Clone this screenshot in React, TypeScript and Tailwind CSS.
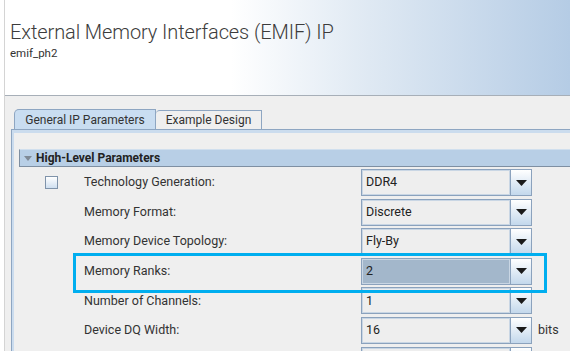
import React from 'react';

const ROWS = [
  { label: 'Technology Generation:', value: 'DDR4', check: true },
  { label: 'Memory Format:', value: 'Discrete' },
  { label: 'Memory Device Topology:', value: 'Fly-By' },
  { label: 'Memory Ranks:', value: '2', selected: true },
  { label: 'Number of Channels:', value: '1' },
  { label: 'Device DQ Width:', value: '16', unit: 'bits' },
  { label: '', value: '' },
];

function Dropdown({ value, selected }: { value: string; selected?: boolean }) {
  return (
    <div className="flex h-[27px] w-[171px] shrink-0">
      <div
        className={`flex-1 flex items-center pl-[4px] text-[12.5px] text-[#222] border border-[#8ba2bd] shadow-[inset_0_0_0_1px_#c9d6e4] ${
          selected ? 'bg-[#a3b7cb]' : 'bg-[#eeeeee]'
        }`}
      >
        {value}
      </div>
      <div className="w-[21px] flex items-center justify-center border border-l-0 border-[#8ba2bd] bg-[linear-gradient(to_bottom,#ffffff,#c3d8ec)]">
        <svg width="11" height="6" viewBox="0 0 11 6">
          <path d="M0 0 H11 L5.5 6 Z" fill="#1a1a1a" />
        </svg>
      </div>
    </div>
  );
}

export default function App() {
  return (
    <div className="relative w-[570px] h-[351px] overflow-hidden flex bg-white font-['Roboto',sans-serif] text-[#333]">
      <div className="w-[5px] shrink-0 bg-white border-r border-[#d4d4d4]" />
      <div className="flex-1 flex flex-col">
        <div className="h-[96px] shrink-0 border-b border-[#a7afb8] bg-[linear-gradient(to_right,#ffffff_0%,#ffffff_40%,#e2ebf4_62%,#b5cce5_100%)] pl-[5px] pt-[19px]">
          <h1 className="text-[20px] leading-[26px] font-light text-[#3c3c3c] tracking-[-0.1px]">External Memory Interfaces (EMIF) IP</h1>
          <p className="text-[11.5px] leading-[14px] text-[#333] mt-[1px]">emif_ph2</p>
        </div>

        <div className="flex-1 bg-[#efefef] pt-[13px] flex flex-col">
          <div className="flex ml-[9px] h-[20px]">
            <div className="w-[142px] h-full flex items-center justify-center text-[12px] text-[#333] bg-[#c9ddf1] border border-b-0 border-[#8ea6c2] rounded-tl-[5px]">
              General IP Parameters
            </div>
            <div className="w-[106px] h-[19px] mt-[1px] flex items-center justify-center text-[12px] text-[#333] bg-[#efefef] border border-l-0 border-b-0 border-[#8ea6c2] rounded-tl-[4px]">
              Example Design
            </div>
          </div>

          <div className="flex-1 ml-[6px] border-t border-l border-[#8ea6c2]">
            <div className="h-full border-t-[3px] border-l-[2px] border-[#cbdcee] pt-[16px] pl-[5px]">
              <div className="h-[18px] flex items-center bg-[#b8cfe6] border-t border-[#d0dfee] border-b border-l border-b-[#7e8fa2] border-l-[#7e8fa2] pl-[4px] gap-[4px]">
                <svg width="8" height="5" viewBox="0 0 8 5">
                  <path d="M0 0 H8 L4 5 Z" fill="#7f8a96" />
                </svg>
                <span className="text-[12px] font-bold text-[#222]">High-Level Parameters</span>
              </div>

              <div className="pt-[2px] flex flex-col">
                {ROWS.map((r, i) => (
                  <div key={i} className="h-[29.6px] flex items-start">
                    <div className="w-[65px] h-[27px] shrink-0 flex items-center">
                      {r.check && (
                        <div className="ml-[26px] w-[13px] h-[13px] border border-[#7f93aa] bg-[linear-gradient(to_bottom,#ffffff,#cfdff0)]" />
                      )}
                    </div>
                    <div className="w-[277px] h-[27px] shrink-0 flex items-center text-[12.5px] text-[#333]">
                      {r.label}
                    </div>
                    <Dropdown value={r.value} selected={r.selected} />
                    {r.unit && (
                      <div className="h-[27px] flex items-center ml-[6px] text-[12.5px] text-[#333]">{r.unit}</div>
                    )}
                  </div>
                ))}
              </div>
            </div>
          </div>
        </div>
      </div>

      <div className="absolute left-[73px] top-[253px] w-[474px] h-[40px] border-[3px] border-[#00aeef]" />
    </div>
  );
}
